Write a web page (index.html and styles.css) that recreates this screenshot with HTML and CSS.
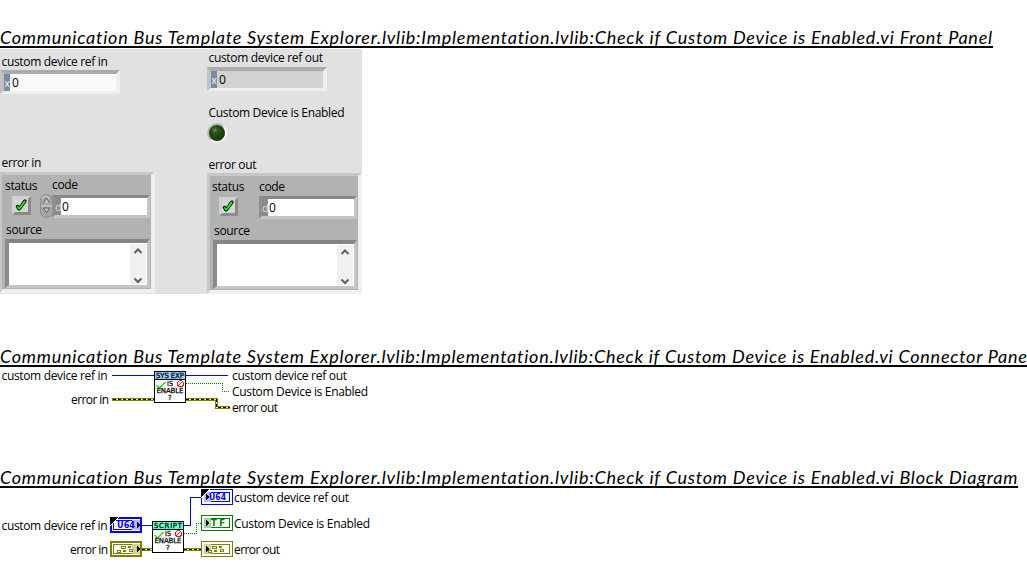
FILE: index.html
```html
<!DOCTYPE html>
<html lang="en">
<head>
<meta charset="utf-8">
<title>Check if Custom Device is Enabled.vi</title>
<link rel="stylesheet" href="styles.css">
</head>
<body>
<section class="sec sec-panel">
  <h2 class="title title-panel">Communication Bus Template System Explorer.lvlib:Implementation.lvlib:Check if Custom Device is Enabled.vi Front Panel</h2>
  <div class="front-panel">
    <div class="col col-in">
      <div class="label ref-label">custom device ref in</div>
      <div class="numeric"><span class="radix">x</span><span class="value">0</span></div>
      <div class="label err-label">error in</div>
      <div class="cluster">
        <div class="row names"><span class="label">status</span><span class="label code-label">code</span></div>
        <div class="row fields">
          <div class="led-button"><svg width="14" height="14" viewBox="0 0 14 14"><path d="M2 8l2-1 1 2 5-7h2v2L6 12H4z" fill="#0f0" stroke="#000"/></svg></div>
          <svg class="spinner" width="13" height="24" viewBox="0 0 13 24"><rect x=".5" y=".5" width="12" height="23" rx="6" fill="#a6a6a6" stroke="#8c8c8c"/><path d="M2 5q4-6 7 0M1 12h11" stroke="#ddd" fill="none"/><path d="M3.500 9L6.500 4L9.500 9M3.500 14h6L6.500 19z" fill="#c6c6c6" stroke="#606060"/></svg>
          <div class="code"><span class="radix">d</span><span class="value">0</span></div>
        </div>
        <div class="label source-label">source</div>
        <div class="source"><div class="scroll"><svg width="16" height="40" viewBox="0 0 16 40"><path d="M4.500 9L8 5.500L11.500 9M4.500 34.500L8 38l3.500-3.500" fill="none" stroke="#606060" stroke-width="2"/></svg></div></div>
      </div>
    </div>
    <div class="col col-out">
      <div class="label ref-label">custom device ref out</div>
      <div class="numeric indicator"><span class="radix">x</span><span class="value">0</span></div>
      <div class="label enabled-label">Custom Device is Enabled</div>
      <div class="lamp"></div>
      <div class="label err-label">error out</div>
      <div class="cluster">
        <div class="row names"><span class="label">status</span><span class="label code-label">code</span></div>
        <div class="row fields">
          <div class="led-button"><svg width="14" height="14" viewBox="0 0 14 14"><path d="M2 8l2-1 1 2 5-7h2v2L6 12H4z" fill="#0f0" stroke="#000"/></svg></div>
          <div class="code"><span class="radix">d</span><span class="value">0</span></div>
        </div>
        <div class="label source-label">source</div>
        <div class="source"><div class="scroll"><svg width="16" height="40" viewBox="0 0 16 40"><path d="M4.500 9L8 5.500L11.500 9M4.500 34.500L8 38l3.500-3.500" fill="none" stroke="#606060" stroke-width="2"/></svg></div></div>
      </div>
    </div>
  </div>
</section>

<section class="sec sec-connector">
  <h2 class="title title-connector">Communication Bus Template System Explorer.lvlib:Implementation.lvlib:Check if Custom Device is Enabled.vi Connector Pane</h2>
  <svg class="diagram" width="380" height="53" viewBox="0 367 380 53">
    <defs>
      <g id="vi-body">
        <rect x=".5" y=".5" width="31" height="31" fill="#fff" stroke="#000"/>
        <path d="M2 14h2v1h1v1h1v-1h1v-1h1v-1h1v-1h1v-1h2v1h-1v1h-1v1H9v1H8v1H7v2H5v-1H4v-1H3v-1H2z" fill="#2fe01b"/>
        <text class="pix" x="13" y="15" textLength="6" lengthAdjust="spacingAndGlyphs">IS</text>
        <circle cx="26.500" cy="12.500" r="3" fill="#fff" stroke="#f01818"/><path d="M24.500 14.500l4-4" stroke="#f01818"/>
        <text class="pix" x="2.500" y="22" textLength="27" lengthAdjust="spacing">ENABLE</text>
        <text class="pix" x="14" y="29">?</text>
      </g>
      <g id="cluster-glyph">
        <path d="M7 9h4v3H7zM11 5h5v3h-5zM13 9h3v2h-3zM18 5h3v2h-3zM19 8h4v3h-4z" fill="#808000"/>
        <path d="M8 10h2v1H8zM12 6h3v1h-3zM20 9h2v1h-2z" fill="#fff"/>
      </g>
    </defs>
    <g class="wires">
      <path class="ref" d="M112 375.500h42M186 375.500h42"/>
      <path class="bool" d="M186 383.500h36.500v8H229"/>
      <path class="err-base" d="M112 399.500h42M186 399.500h30.500v8H230"/>
      <path class="err-core" d="M113 399.500h41M186 399.500h30.500v8H230"/>
      <path class="err-dash" d="M113 399.500h41M186 399.500h30.500v8H230"/>
    </g>
    <g transform="translate(154 371)">
      <use href="#vi-body"/>
      <rect x=".5" y=".5" width="31" height="8" fill="#99ccff" stroke="#000"/>
      <text class="pix" x="2" y="7" textLength="28" lengthAdjust="spacing">SYS EXP</text>
    </g>
    <g class="names">
      <text x="1.500" y="380" textLength="106">custom device ref in</text>
      <text x="71" y="404" textLength="38">error in</text>
      <text x="232" y="380" textLength="115">custom device ref out</text>
      <text x="232" y="396" textLength="136">Custom Device is Enabled</text>
      <text x="232" y="412" textLength="46">error out</text>
    </g>
  </svg>
</section>

<section class="sec sec-block">
  <h2 class="title title-block">Communication Bus Template System Explorer.lvlib:Implementation.lvlib:Check if Custom Device is Enabled.vi Block Diagram</h2>
  <svg class="diagram" width="380" height="75" viewBox="0 488 380 75">
    <g class="wires">
      <path class="ref" d="M142 525.500h10M184 525.500h6.500v-28H201"/>
      <path class="bool" d="M184 533.500h12.500v-10H201"/>
      <path class="err-base" d="M142 549.500h10M184 549.500h17"/>
      <path class="err-core" d="M142 549.500h10M184 549.500h17"/>
      <path class="err-dash" d="M142 549.500h10M184 549.500h17"/>
    </g>
    <g transform="translate(152 521)">
      <use href="#vi-body"/>
      <rect x=".5" y=".5" width="31" height="8" fill="#66ffcc" stroke="#000"/>
      <text class="pix" x="2" y="7" textLength="28" lengthAdjust="spacing">SCRIPT</text>
    </g>
    <g transform="translate(110 517)">
      <rect x="1" y="1" width="30" height="14" fill="#fff" stroke="#00f" stroke-width="2"/>
      <rect x="3.500" y="3.500" width="25" height="9" fill="#fff" stroke="#00f"/>
      <rect x="22" y="3" width="8" height="10" fill="#b6b6ff"/>
      <text class="type t-blue" x="7" y="11" textLength="18" lengthAdjust="spacingAndGlyphs">U64</text>
      <path d="M0 9V0h9z" fill="#000"/><path d="M0 9L9 0" stroke="#fff"/><path d="M27 4.500v7l3.500-3.500z"/>
    </g>
    <g transform="translate(201 489)">
      <rect x=".5" y=".5" width="31" height="15" fill="#fff" stroke="#00f"/>
      <rect x="3.500" y="3.500" width="25" height="9" fill="#fff" stroke="#00f"/>
      <rect x="3" y="3" width="7" height="10" fill="#b6b6ff"/>
      <text class="type t-blue" x="8" y="11" textLength="17" lengthAdjust="spacingAndGlyphs">U64</text>
      <path d="M0 9V0h9z" fill="#000"/><path d="M0 9L9 0" stroke="#fff"/><path d="M5 4.500v7l3.500-3.500z"/>
    </g>
    <g transform="translate(201 515)">
      <rect x=".5" y=".5" width="31" height="15" fill="#fff" stroke="#008000"/>
      <rect x="3.500" y="3.500" width="25" height="9" fill="#fff" stroke="#008000"/>
      <rect x="3" y="3" width="7" height="10" fill="#a8cfa8"/>
      <text class="type t-green" x="10" y="11" textLength="14">TF</text><path d="M5 4.500v7l3.500-3.500z"/>
    </g>
    <g transform="translate(110 541)">
      <rect x="1" y="1" width="30" height="14" fill="#fff" stroke="#808000" stroke-width="2"/>
      <rect x="3.500" y="3.500" width="25" height="9" fill="#fff" stroke="#808000"/>
      <rect x="22" y="3" width="8" height="10" fill="#d2d2a0"/>
      <use href="#cluster-glyph"/><path d="M27 4.500v7l3.500-3.500z"/>
    </g>
    <g transform="translate(201 541)">
      <rect x=".5" y=".5" width="31" height="15" fill="#fff" stroke="#808000"/>
      <rect x="3.500" y="3.500" width="25" height="9" fill="#fff" stroke="#808000"/>
      <rect x="3" y="3" width="7" height="10" fill="#d2d2a0"/>
      <use href="#cluster-glyph"/><path d="M5 4.500v7l3.500-3.500z"/>
    </g>
    <g class="names">
      <text x="1.500" y="530" textLength="106">custom device ref in</text>
      <text x="70" y="554" textLength="38">error in</text>
      <text x="234" y="502" textLength="115">custom device ref out</text>
      <text x="234" y="528" textLength="136">Custom Device is Enabled</text>
      <text x="234" y="554" textLength="46">error out</text>
    </g>
  </svg>
</section>
</body>
</html>
```
FILE: styles.css
```css
* { box-sizing: border-box; }
body { margin: 0; background: #fff; color: #000; overflow: hidden; font: 12px "Open Sans", "Noto Sans", sans-serif; }
svg { display: block; }
.sec-panel { padding-top: 26px; height: 345px; }
.sec-connector { height: 121px; }
.title { margin: 0; width: max-content; height: 22px; overflow: hidden; border-bottom: 2px solid #000; font: italic 400 18px/23px Lato, sans-serif; white-space: nowrap; }
.title-panel { letter-spacing: 0.771px; }
.title-connector { letter-spacing: 0.76px; }
.title-block { letter-spacing: 0.769px; }

.front-panel { display: flex; width: 362px; height: 245px; margin-top: 1px; background: #e1e1e1; overflow: hidden; }
.col-in { width: 207px; padding-top: 5px; }
.col-out { width: 155px; padding-top: 1px; }
.label { height: 16px; line-height: 16px; white-space: nowrap; letter-spacing: -0.32px; }
.col-in > .label { padding-left: 1.5px; }
.col-out > .label { padding-left: 1.5px; }
.numeric { display: flex; width: 120px; height: 24px; border: 4px solid; border-color: #ababab #efefef #efefef #c2c2c2; border-bottom-width: 3px; background: #fafafa; }
.indicator { background: #d2d2d2; }
.radix { width: 6px; background: #7a8ba8; color: #fff; line-height: 18px; font-size: 10px; text-align: center; }
.value { padding-left: 2px; line-height: 17px; }
.enabled-label { margin-top: 14px; }
.lamp { width: 20px; height: 20px; margin: 2px 0 0; border: 2px solid; border-color: #b8b8b8 #f7f7f7 #f7f7f7 #b8b8b8; border-radius: 50%; background: radial-gradient(circle at 37% 32%, #6b8d58 0, #2a521c 20%, #174008 60%, #102a07 100%); }
.col-in .numeric { margin-top: 0; }
.col-out .numeric { margin-top: 1px; }
.col-in .err-label { margin-top: 61px; }
.col-out .err-label { margin-top: 14px; }
.cluster { width: 155px; height: 121px; border: 3px solid; border-width: 3px 4px 4px 3px; border-color: #c7c7c7 #efefef #efefef #c7c7c7; background: #b2b2b2; }
.col-in .cluster { margin-top: 1px; border-left-width: 2px; }
.col-out .cluster { margin: 0; }
.row { display: flex; }
.names { padding-left: 3px; height: 18px; }
.col-out .names { padding-left: 2px; }
.names .label { margin-top: 3px; width: 47px; }
.names .code-label { margin-top: 2px; }
.col-out .names .code-label { margin-top: 3px; }
.fields { height: 25px; padding-top: 2px; }
.led-button { width: 19px; height: 19px; margin: 1px 0 0 10px; border: 3px solid; border-color: #d0d0d0 #8b8b8b #8b8b8b #d0d0d0; background: #d6d6d6; }
.col-out .led-button { margin-left: 9px; }
.led-button svg { margin: -1px 0 0 -1px; }
.spinner { margin: -1px 0 0 9px; flex: none; }
.code { display: flex; width: 98px; height: 23px; margin-top: 0; border: 3px solid; border-color: #888 #c5c5c5 #c5c5c5 #909090; background: #fff; flex: none; }
.code .radix { background: #8b8b8b; color: #ddd; font-size: 11px; }
.code .value { padding-left: 1px; }
.col-in .code { margin-left: -1px; }
.col-out .code { margin-left: 21px; }
.source-label { margin-top: 4px; padding-left: 4px; }
.source { display: flex; justify-content: flex-end; width: 145px; height: 49px; margin: 1px 0 0 3px; padding: 1px; border: 4px solid; border-width: 4px 3px 3px 4px; border-color: #858585 #c5c5c5 #c5c5c5 #8b8b8b; background: #fff; }
.col-out .source { width: 144px; }
.scroll { width: 16px; height: 40px; background: #f0f0f0; }

.diagram { shape-rendering: crispEdges; }
.diagram .names text { font: 12px "Open Sans", "Noto Sans", sans-serif; }
.wires path { fill: none; }
.ref { stroke: #00f; }
.wires .bool { stroke: #008000; stroke-dasharray: 1 1; }
.err-base { stroke: #808000; stroke-width: 3; }
.err-core { stroke: #ffff40; }
.err-dash { stroke: #000; stroke-dasharray: 3 2; }
.pix { font: 7px "DejaVu Sans", sans-serif; stroke: #000; stroke-width: 0.25px; }
.type { font: bold 8.5px "DejaVu Sans", sans-serif; }
.t-blue { fill: #00f; }
.t-green { fill: #008000; }
```
